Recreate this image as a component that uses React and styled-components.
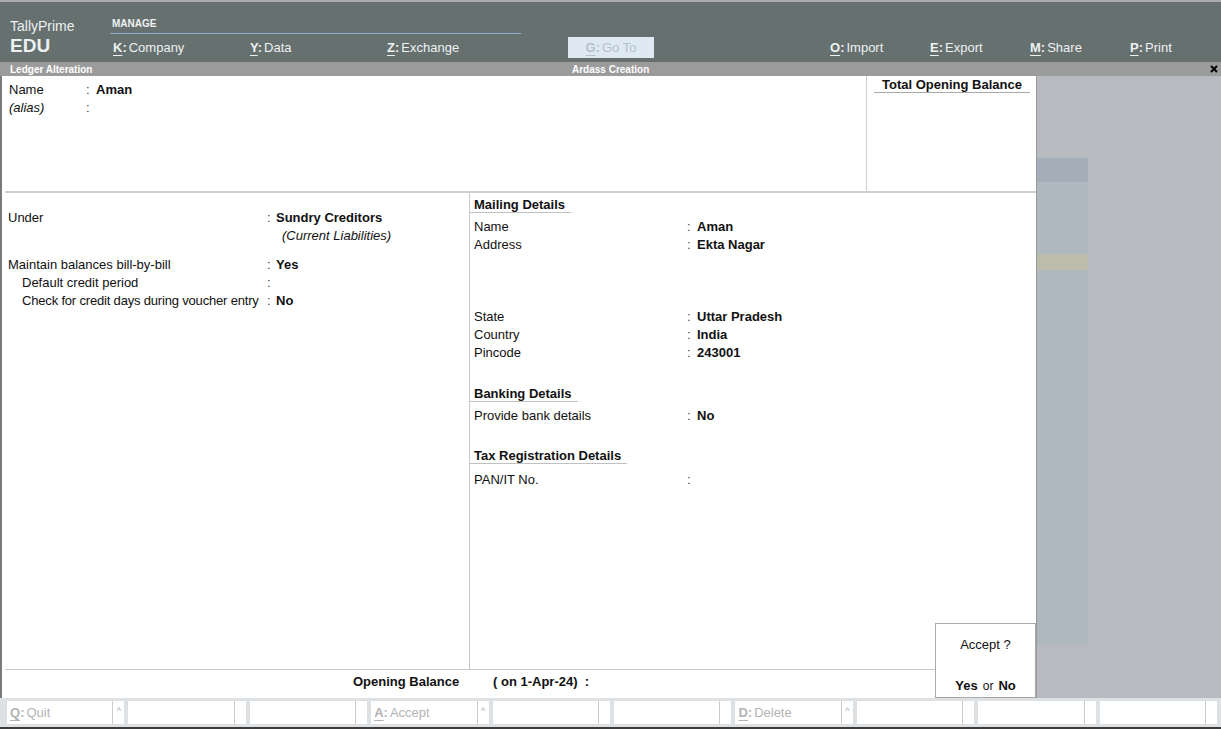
import React from 'react';
import styled, { createGlobalStyle } from 'styled-components';

const Global = createGlobalStyle`
  html, body { margin: 0; padding: 0; }
  body {
    font-family: "Liberation Sans", Arial, sans-serif;
    background: #b7bbbf;
    color: #111;
  }
  #root { width: 1221px; height: 729px; overflow: hidden; }
`;

const Screen = styled.div`
  display: flex;
  flex-direction: column;
  width: 1221px;
  height: 729px;
`;

/* ---------- Header ---------- */
const Header = styled.header`
  height: 62px;
  box-sizing: border-box;
  border-top: 2px solid #a7abab;
  background: #65706f;
  display: flex;
  color: #eef1f1;
`;

const Brand = styled.div`
  width: 110px;
  box-sizing: border-box;
  padding: 16px 0 0 10px;
  display: flex;
  flex-direction: column;
`;
const BrandName = styled.div`
  font-size: 14px;
  line-height: 17px;
`;
const BrandEdition = styled.div`
  font-size: 19px;
  font-weight: bold;
  line-height: 22px;
`;

const ManageGroup = styled.div`
  width: 411px;
  display: flex;
  flex-direction: column;
`;
const GroupLabel = styled.div`
  height: 32px;
  box-sizing: border-box;
  padding: 16px 0 0 2px;
  font-size: 10px;
  font-weight: bold;
  line-height: 12px;
  border-bottom: 1px solid #8db3d1;
`;
const MenuRow = styled.div`
  display: flex;
`;
const MenuItem = styled.div`
  width: ${p => p.$w}px;
  box-sizing: border-box;
  padding: 5px 0 0 ${p => p.$pad}px;
  font-size: 13px;
  line-height: 18px;
  white-space: nowrap;
`;
const Key = styled.span`
  font-weight: bold;
  text-decoration: underline;
  text-underline-offset: 3px;
`;
const Colon = styled.span`
  font-weight: bold;
  margin-right: 2px;
`;
const GoTo = styled.div`
  margin: 35px 0 0 47px;
  width: 86px;
  height: 21px;
  background: #dfe9f3;
  color: #b5c1cc;
  font-size: 13px;
  line-height: 22px;
  text-align: center;
`;
const RightMenu = styled.div`
  margin-left: auto;
  display: flex;
  align-self: flex-end;
  height: 28px;
`;

/* ---------- Title bar ---------- */
const TitleBar = styled.div`
  height: 14px;
  background: #9b9b9b;
  display: flex;
  align-items: center;
  color: #fff;
  font-size: 10px;
  font-weight: bold;
`;
const TitleLeft = styled.div`
  width: 562px;
  padding-left: 10px;
`;
const TitleCenter = styled.div`
  flex: 1;
`;
const CloseBox = styled.div`
  width: 14px;
  display: flex;
  justify-content: center;
  align-items: center;
`;

/* ---------- Body ---------- */
const Body = styled.div`
  height: 622px;
  display: flex;
`;
const MainPanel = styled.div`
  position: relative;
  width: 1037px;
  box-sizing: border-box;
  background: #fff;
  border-left: 2px solid #7a7a7a;
  border-right: 1px solid #9a9a9a;
  display: flex;
  flex-direction: column;
  font-size: 13px;
`;

const TopSection = styled.div`
  height: 115px;
  display: flex;
`;
const NameBlock = styled.div`
  flex: 1;
  padding: 4px 0 0 7px;
`;
const TotalBox = styled.div`
  width: 170px;
  box-sizing: border-box;
  border-left: 1px solid #cfcfcf;
  display: flex;
  flex-direction: column;
  align-items: stretch;
`;
const TotalHeading = styled.div`
  margin: 0 6px 0 7px;
  padding-top: 1px;
  font-weight: bold;
  line-height: 15px;
  text-align: center;
  border-bottom: 1px solid #a9a9a9;
`;

const Divider = styled.div`
  height: 2px;
  margin-left: 3px;
  background: #d0d0d0;
`;

const LowerSection = styled.div`
  flex: 1;
  display: flex;
`;
const LeftColumn = styled.div`
  width: 465px;
  box-sizing: border-box;
  margin-left: 3px;
  padding: 15px 0 0 3px;
  border-right: 1px solid #c9c9c9;
  display: flex;
  flex-direction: column;
`;
const RightColumn = styled.div`
  flex: 1;
  padding-top: 2px;
  display: flex;
  flex-direction: column;
`;

const Section = styled.div`
  display: flex;
  flex-direction: column;
  margin-top: ${p => p.$mt || 0}px;
`;
const SectionHeading = styled.div`
  align-self: flex-start;
  padding: 2px 6px 0 4px;
  font-weight: bold;
  line-height: 15px;
  border-bottom: 1px solid #c0c0c0;
  margin-bottom: 4px;
`;

const Row = styled.div`
  display: grid;
  grid-template-columns: ${p => p.$label}px ${p => p.$colon}px auto;
  line-height: 18px;
  padding-left: ${p => p.$pl || 0}px;
  padding-top: 1px;
  margin-top: ${p => p.$mt || 0}px;
  margin-bottom: -1px;
`;
const Label = styled.span`
  padding-left: ${p => p.$indent || 0}px;
  font-style: ${p => (p.$italic ? 'italic' : 'normal')};
  letter-spacing: ${p => (p.$tight ? '-0.18px' : 'normal')};
  white-space: nowrap;
`;
const Sep = styled.span`
  color: #444;
`;
const Value = styled.span`
  font-weight: ${p => (p.$italic ? 'normal' : 'bold')};
  font-style: ${p => (p.$italic ? 'italic' : 'normal')};
  padding-left: ${p => p.$indent || 0}px;
  white-space: nowrap;
`;
const Spacer = styled.div`
  height: ${p => p.$h}px;
`;

const BalanceRow = styled.div`
  height: 29px;
  box-sizing: border-box;
  margin-left: 3px;
  border-top: 1px solid #c9c9c9;
  display: flex;
  padding-left: 348px;
  font-weight: bold;
  line-height: 24px;
`;
const BalanceLabel = styled.span`
  width: 140px;
`;

const Dialog = styled.div`
  position: absolute;
  right: 0;
  bottom: 0;
  width: 101px;
  height: 75px;
  box-sizing: border-box;
  background: #fff;
  border: 1px solid #a9a9a9;
  display: flex;
  flex-direction: column;
  align-items: center;
  font-size: 13px;
`;
const DialogQuestion = styled.div`
  margin-top: 12px;
  line-height: 18px;
`;
const DialogAnswer = styled.div`
  margin-top: auto;
  margin-bottom: 2px;
  line-height: 18px;
  b { font-weight: bold; }
  span { font-size: 12px; margin: 0 5px; }
`;

const SideArea = styled.div`
  flex: 1;
  background: #b7bbbf;
`;
const FadedPanel = styled.div`
  width: 51px;
  height: 487px;
  margin-top: 82px;
  background: #b0b8bf;
  display: flex;
  flex-direction: column;
`;
const FadedHeader = styled.div`
  height: 24px;
  background: #a3aeb8;
`;
const FadedHighlight = styled.div`
  height: 16px;
  margin-top: 72px;
  background: #bbbcaa;
`;

/* ---------- Footer ---------- */
const Footer = styled.footer`
  height: 31px;
  box-sizing: border-box;
  background: #dde1e4;
  border-bottom: 2px solid #3c3c3c;
  display: grid;
  grid-template-columns: repeat(10, 1fr);
  gap: 4px;
  padding: 3px 4px 4px 7px;
`;
const FButton = styled.div`
  background: #fff;
  display: flex;
`;
const FLabel = styled.div`
  flex: 1;
  border-right: 1px solid #cdcdcd;
  padding-left: 3px;
  font-size: 13px;
  line-height: 23px;
  color: #b3b3b3;
  white-space: nowrap;
`;
const FCaret = styled.div`
  width: 11px;
  text-align: center;
  font-size: 9px;
  line-height: 20px;
  color: #aaa;
`;
const FKey = styled.span`
  text-decoration: underline;
  text-underline-offset: 3px;
  font-weight: bold;
`;
const FColon = styled.span`
  font-weight: bold;
  margin-right: 2px;
`;

const leftMenu = [
  ['K', 'Company'],
  ['Y', 'Data'],
  ['Z', 'Exchange'],
];
const rightMenu = [
  ['O', 'Import'],
  ['E', 'Export'],
  ['M', 'Share'],
  ['P', 'Print'],
];
const footerButtons = [
  { k: 'Q', t: 'Quit', caret: true },
  {},
  {},
  { k: 'A', t: 'Accept', caret: true },
  {},
  {},
  { k: 'D', t: 'Delete', caret: true },
  {},
  {},
  {},
];

function MenuLabel({ k, t }) {
  return (
    <>
      <Key>{k}</Key>
      <Colon>:</Colon>
      {t}
    </>
  );
}

export default function App() {
  return (
    <Screen>
      <Global />
      <Header>
        <Brand>
          <BrandName>TallyPrime</BrandName>
          <BrandEdition>EDU</BrandEdition>
        </Brand>
        <ManageGroup>
          <GroupLabel>MANAGE</GroupLabel>
          <MenuRow>
            {leftMenu.map(([k, t]) => (
              <MenuItem key={k} $w={137} $pad={3}>
                <MenuLabel k={k} t={t} />
              </MenuItem>
            ))}
          </MenuRow>
        </ManageGroup>
        <GoTo>
          <MenuLabel k="G" t="Go To" />
        </GoTo>
        <RightMenu>
          {rightMenu.map(([k, t]) => (
            <MenuItem key={k} $w={100} $pad={9}>
              <MenuLabel k={k} t={t} />
            </MenuItem>
          ))}
        </RightMenu>
      </Header>

      <TitleBar>
        <TitleLeft>Ledger Alteration</TitleLeft>
        <TitleCenter>Ardass Creation</TitleCenter>
        <CloseBox>
          <svg width="8" height="8" viewBox="0 0 8 8">
            <path d="M1 1 L7 7 M7 1 L1 7" stroke="#000" strokeWidth="2" />
          </svg>
        </CloseBox>
      </TitleBar>

      <Body>
        <MainPanel>
          <TopSection>
            <NameBlock>
              <Row $label={77} $colon={10}>
                <Label>Name</Label>
                <Sep>:</Sep>
                <Value>Aman</Value>
              </Row>
              <Row $label={77} $colon={10}>
                <Label $italic>(alias)</Label>
                <Sep>:</Sep>
                <Value />
              </Row>
            </NameBlock>
            <TotalBox>
              <TotalHeading>Total Opening Balance</TotalHeading>
            </TotalBox>
          </TopSection>
          <Divider />
          <LowerSection>
            <LeftColumn>
              <Row $label={259} $colon={9}>
                <Label>Under</Label>
                <Sep>:</Sep>
                <Value>Sundry Creditors</Value>
              </Row>
              <Row $label={259} $colon={9}>
                <Label />
                <Sep />
                <Value $italic $indent={6}>(Current Liabilities)</Value>
              </Row>
              <Spacer $h={11} />
              <Row $label={259} $colon={9}>
                <Label>Maintain balances bill-by-bill</Label>
                <Sep>:</Sep>
                <Value>Yes</Value>
              </Row>
              <Row $label={259} $colon={9}>
                <Label $indent={14}>Default credit period</Label>
                <Sep>:</Sep>
                <Value />
              </Row>
              <Row $label={259} $colon={9}>
                <Label $indent={14} $tight>Check for credit days during voucher entry</Label>
                <Sep>:</Sep>
                <Value>No</Value>
              </Row>
            </LeftColumn>
            <RightColumn>
              <Section>
                <SectionHeading>Mailing Details</SectionHeading>
                <Row $label={213} $colon={10} $pl={4}>
                  <Label>Name</Label>
                  <Sep>:</Sep>
                  <Value>Aman</Value>
                </Row>
                <Row $label={213} $colon={10} $pl={4}>
                  <Label>Address</Label>
                  <Sep>:</Sep>
                  <Value>Ekta Nagar</Value>
                </Row>
                <Spacer $h={54} />
                <Row $label={213} $colon={10} $pl={4}>
                  <Label>State</Label>
                  <Sep>:</Sep>
                  <Value>Uttar Pradesh</Value>
                </Row>
                <Row $label={213} $colon={10} $pl={4}>
                  <Label>Country</Label>
                  <Sep>:</Sep>
                  <Value>India</Value>
                </Row>
                <Row $label={213} $colon={10} $pl={4}>
                  <Label>Pincode</Label>
                  <Sep>:</Sep>
                  <Value>243001</Value>
                </Row>
              </Section>
              <Section $mt={23}>
                <SectionHeading>Banking Details</SectionHeading>
                <Row $label={213} $colon={10} $pl={4}>
                  <Label>Provide bank details</Label>
                  <Sep>:</Sep>
                  <Value>No</Value>
                </Row>
              </Section>
              <Section $mt={22}>
                <SectionHeading>Tax Registration Details</SectionHeading>
                <Row $label={213} $colon={10} $pl={4} $mt={2}>
                  <Label>PAN/IT No.</Label>
                  <Sep>:</Sep>
                  <Value />
                </Row>
              </Section>
            </RightColumn>
          </LowerSection>
          <BalanceRow>
            <BalanceLabel>Opening Balance</BalanceLabel>
            <span>( on 1-Apr-24)&nbsp; :</span>
          </BalanceRow>
          <Dialog>
            <DialogQuestion>Accept ?</DialogQuestion>
            <DialogAnswer>
              <b>Yes</b>
              <span>or</span>
              <b>No</b>
            </DialogAnswer>
          </Dialog>
        </MainPanel>
        <SideArea>
          <FadedPanel>
            <FadedHeader />
            <FadedHighlight />
          </FadedPanel>
        </SideArea>
      </Body>

      <Footer>
        {footerButtons.map((b, i) => (
          <FButton key={i}>
            <FLabel>
              {b.k && (
                <>
                  <FKey>{b.k}</FKey>
                  <FColon>:</FColon>
                  {b.t}
                </>
              )}
            </FLabel>
            <FCaret>{b.caret ? '^' : ''}</FCaret>
          </FButton>
        ))}
      </Footer>
    </Screen>
  );
}
